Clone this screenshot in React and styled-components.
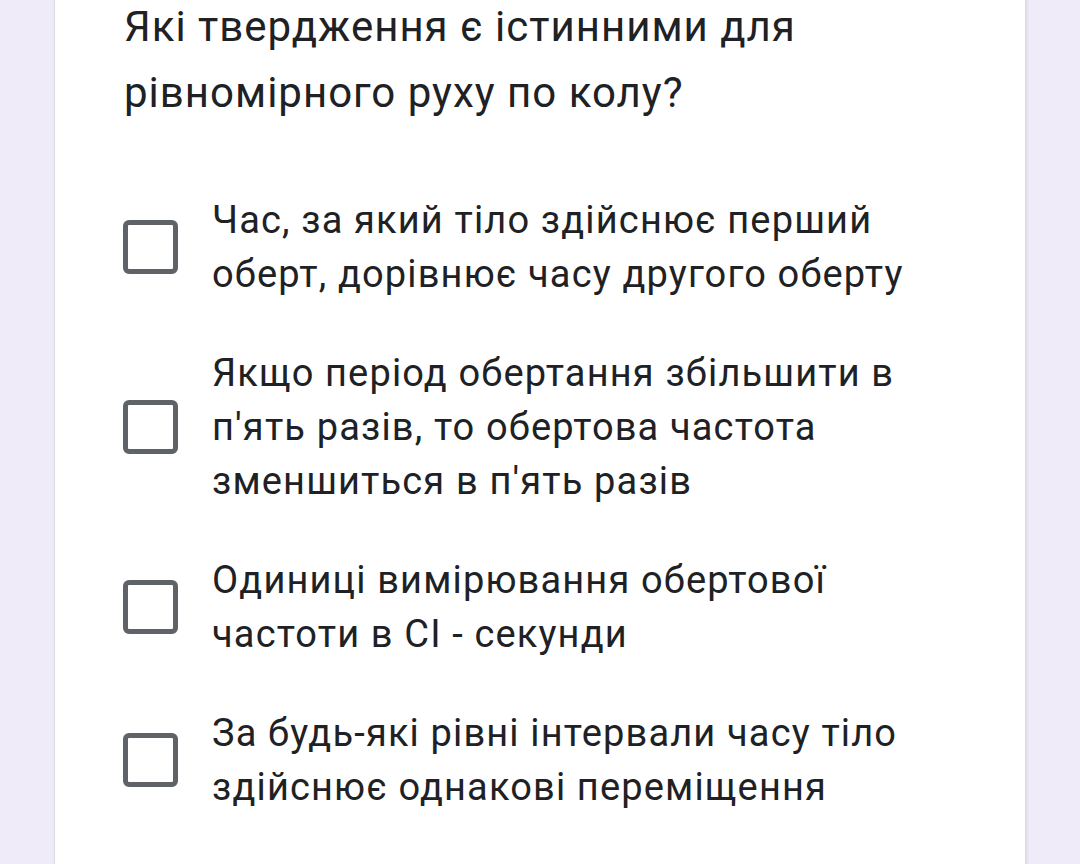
import React from "react";
import styled, { createGlobalStyle } from "styled-components";

const GlobalStyle = createGlobalStyle`
  html, body {
    margin: 0;
    padding: 0;
    background: #f0ebf8;
    overflow: hidden;
  }
  body {
    font-family: Roboto, "Noto Sans", Arial, sans-serif;
    color: #202124;
  }
`;

const Page = styled.div`
  display: flex;
  min-height: 100vh;
  padding-left: 54px;
`;

const Card = styled.section`
  width: 972px;
  box-sizing: border-box;
  min-height: 900px;
  margin-top: -20px;
  padding: 13px 69px 40px 69px;
  background: #fff;
  border: 1px solid #dadce0;
  box-shadow: 1px 0 3px rgba(60, 40, 120, 0.12);
`;

const Question = styled.h2`
  margin: 0 0 68px;
  font-size: 42px;
  font-weight: 400;
  line-height: 65.5px;
  letter-spacing: 1px;
`;

const Options = styled.div`
  display: flex;
  flex-direction: column;
  gap: 45px;
`;

const Option = styled.label`
  display: flex;
  align-items: center;
  gap: 34px;
  cursor: pointer;
`;

const Box = styled.span`
  flex: none;
  width: 55px;
  height: 54px;
  box-sizing: border-box;
  border: 5px solid #5f6368;
  border-radius: 6px;
  margin-left: -1px;
`;

const Label = styled.span`
  max-width: 744px;
  font-size: 38px;
  line-height: 54px;
  letter-spacing: 1.15px;
`;

const options = [
  "Час, за який тіло здійснює перший оберт, дорівнює часу другого оберту",
  "Якщо період обертання збільшити в п'ять разів, то обертова частота зменшиться в п'ять разів",
  "Одиниці вимірювання обертової частоти в СІ - секунди",
  "За будь-які рівні інтервали часу тіло здійснює однакові переміщення",
];

export default function App() {
  return (
    <>
      <GlobalStyle />
      <Page>
        <Card>
          <Question>Які твердження є істинними для рівномірного руху по колу?</Question>
          <Options>
            {options.map((text) => (
              <Option key={text}>
                <Box />
                <Label>{text}</Label>
              </Option>
            ))}
          </Options>
        </Card>
      </Page>
    </>
  );
}
